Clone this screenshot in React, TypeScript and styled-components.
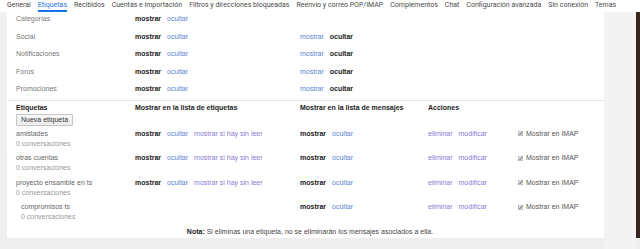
import * as React from "react";
import styled, { createGlobalStyle } from "styled-components";

const GlobalStyle = createGlobalStyle`
  html, body {
    margin: 0;
    padding: 0;
    background: #f0f0f0;
  }
  body {
    font-family: "Liberation Sans", Arial, sans-serif;
    font-size: 7px;
    color: #222;
  }
`;

const tabs = [
  "General",
  "Etiquetas",
  "Recibidos",
  "Cuentas e importación",
  "Filtros y direcciones bloqueadas",
  "Reenvío y correo POP/IMAP",
  "Complementos",
  "Chat",
  "Configuración avanzada",
  "Sin conexión",
  "Temas",
];

const categories = ["Categorías", "Social", "Notificaciones", "Foros", "Promociones"];

type Label = { name: string; nested?: boolean; unread?: boolean };

const labels: Label[] = [
  { name: "amistades", unread: true },
  { name: "otras cuentas", unread: true },
  { name: "proyecto ensamble en ts", unread: true },
  { name: "compromisos ts", nested: true },
];

const Page = styled.div`
  width: 640px;
  height: 249px;
  display: flex;
  flex-direction: column;
  overflow: hidden;
  background: linear-gradient(180deg, #f2f2f2 0%, #eeeeee 100%);
`;

const TabBar = styled.div`
  height: 12px;
  background: #fff;
  display: flex;
  gap: 7px;
  padding-left: 7px;
  font-family: Roboto, "Liberation Sans", sans-serif;
  font-size: 7px;
  flex-shrink: 0;
`;

const Tab = styled.div<{ $active?: boolean }>`
  height: 12px;
  line-height: 10px;
  color: ${(p) => (p.$active ? "#1a73e8" : "#4a4a4a")};
  white-space: nowrap;
  box-sizing: border-box;
  border-bottom: 2px solid ${(p) => (p.$active ? "#1a73e8" : "transparent")};
`;

const Body = styled.div`
  display: flex;
  flex: 1;
`;

const Gutter = styled.div`
  width: 7px;
  flex-shrink: 0;
`;

const Filler = styled.div`
  flex: 1;
  background: #f3f3f3;
`;

const Edge = styled.div`
  width: 4px;
  height: 226px;
  background: #3a2420;
`;

const Panel = styled.div`
  width: 597px;
  height: 226px;
  background: #fff;
  display: flex;
  flex-direction: column;
`;

const Grid = styled.div`
  display: grid;
  grid-template-columns: 119px 165px 128px 90px 1fr;
  padding-left: 9px;
  box-sizing: border-box;
`;

const CatRow = styled(Grid)`
  height: 17.5px;
  padding-top: 3px;
  line-height: 8px;
  align-items: start;
`;

const Separator = styled.div`
  height: 0;
  border-top: 1px solid #e6e6e6;
`;

const HeaderRow = styled(Grid)`
  height: 13px;
  padding-top: 3px;
  line-height: 8px;
  align-items: start;
  font-weight: bold;
  color: #222;
`;

const LabelRow = styled(Grid)`
  height: 24.5px;
  align-items: start;
  line-height: 10px;
`;

const CatName = styled.span`
  color: #777;
`;

const LabelCell = styled.div<{ $nested?: boolean }>`
  padding-left: ${(p) => (p.$nested ? "5px" : "0")};
  color: #666;
`;

const Sub = styled.div`
  color: #999;
`;

const Actions = styled.div`
  display: flex;
  gap: 6px;
  white-space: nowrap;
`;

const Strong = styled.span`
  font-weight: bold;
  color: #222;
`;

const Link = styled.span<{ $violet?: boolean }>`
  color: ${(p) => (p.$violet ? "#8a7ad6" : "#5b7fd0")};
`;

const ButtonRow = styled.div`
  padding-left: 9px;
  height: 15px;
`;

const Button = styled.div`
  display: inline-block;
  height: 12px;
  line-height: 10px;
  padding: 0 4px;
  box-sizing: border-box;
  border: 1px solid #c6c6c6;
  border-radius: 1px;
  background: linear-gradient(#f8f8f8, #ececec);
  color: #333;
`;

const Imap = styled.label`
  display: flex;
  align-items: center;
  gap: 3px;
  color: #555;
  white-space: nowrap;
`;

const Note = styled.div`
  text-align: center;
  line-height: 10px;
  color: #444;
  padding-left: 9px;
`;

const Check = () => (
  <svg width="5" height="5" viewBox="0 0 5 5">
    <rect x="0.25" y="0.25" width="4.5" height="4.5" fill="#eee" stroke="#999" strokeWidth="0.5" />
    <path d="M1 2.6 L2 3.6 L4 1.2" fill="none" stroke="#333" strokeWidth="0.9" />
  </svg>
);

export default function App() {
  return (
    <>
      <GlobalStyle />
      <Page>
        <TabBar>
          {tabs.map((t) => (
            <Tab key={t} $active={t === "Etiquetas"}>
              {t}
            </Tab>
          ))}
        </TabBar>
        <Body>
          <Gutter />
          <Panel>
            {categories.map((c, i) => (
              <CatRow key={c}>
                <CatName>{c}</CatName>
                <Actions>
                  <Strong>mostrar</Strong>
                  <Link>ocultar</Link>
                </Actions>
                {i === 0 ? (
                  <span />
                ) : (
                  <Actions>
                    <Link>mostrar</Link>
                    <Strong>ocultar</Strong>
                  </Actions>
                )}
              </CatRow>
            ))}
            <Separator />
            <HeaderRow>
              <span>Etiquetas</span>
              <span>Mostrar en la lista de etiquetas</span>
              <span>Mostrar en la lista de mensajes</span>
              <span>Acciones</span>
            </HeaderRow>
            <ButtonRow>
              <Button>Nueva etiqueta</Button>
            </ButtonRow>
            {labels.map((l) => (
              <LabelRow key={l.name}>
                <LabelCell $nested={l.nested}>
                  <div>{l.name}</div>
                  <Sub>0 conversaciones</Sub>
                </LabelCell>
                {l.unread ? (
                  <Actions>
                    <Strong>mostrar</Strong>
                    <Link>ocultar</Link>
                    <Link $violet>mostrar si hay sin leer</Link>
                  </Actions>
                ) : (
                  <span />
                )}
                <Actions>
                  <Strong>mostrar</Strong>
                  <Link>ocultar</Link>
                </Actions>
                <Actions>
                  <Link $violet>eliminar</Link>
                  <Link $violet>modificar</Link>
                </Actions>
                <Imap>
                  <Check />
                  Mostrar en IMAP
                </Imap>
              </LabelRow>
            ))}
            <Note>
              <Strong>Nota:</Strong> Si eliminas una etiqueta, no se eliminarán los mensajes asociados a ella.
            </Note>
          </Panel>
          <Filler />
          <Edge />
        </Body>
      </Page>
    </>
  );
}
